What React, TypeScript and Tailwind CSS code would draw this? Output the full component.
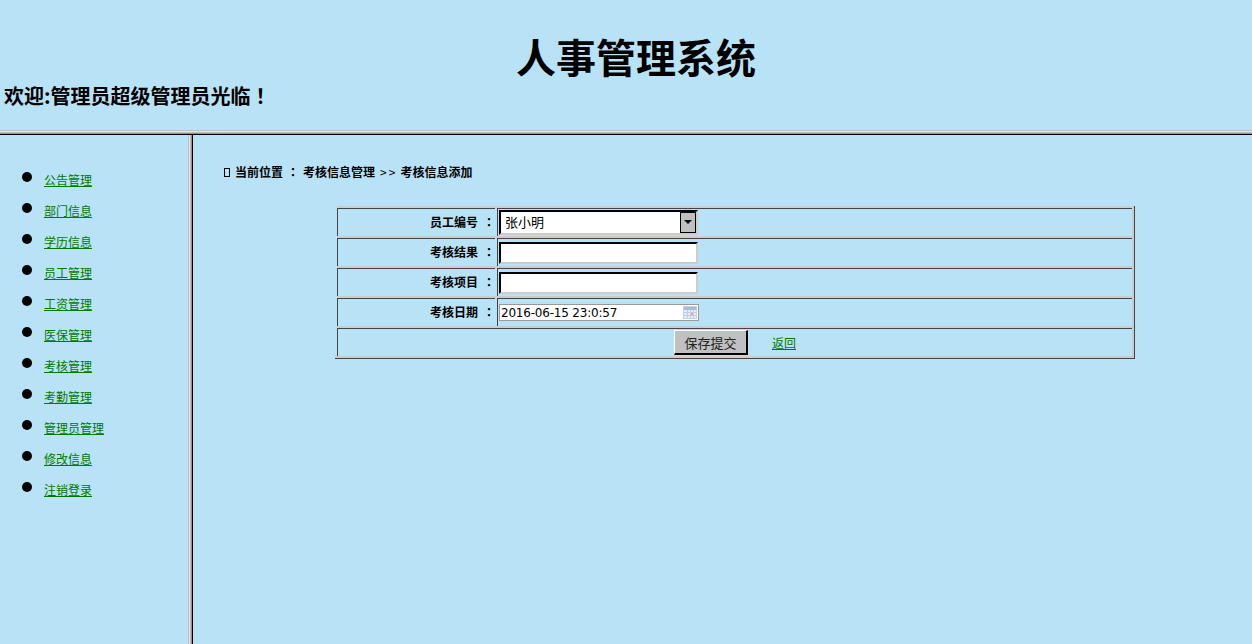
const nav = ["公告管理","部门信息","学历信息","员工管理","工资管理","医保管理","考核管理","考勤管理","管理员管理","修改信息","注销登录"];

const Full = ({ c }: { c: string }) => (
  <span style={{ fontFamily: "'Noto Sans CJK TC',sans-serif" }}>{c}</span>
);

function Row({ label, children }: { label: string; children: React.ReactNode }) {
  return (
    <div className="flex h-[30px] gap-[2px] border-t-2 border-r-2 border-[#ccc]">
      <div className="flex w-[158px] items-center justify-end border-l border-t border-[#444] pb-[2px] text-[12px] font-bold text-black">
        {label}<span className="ml-[5px]"><Full c="：" /></span>
      </div>
      <div className="flex flex-1 items-center border-l border-t border-[#444] pl-[1px]">{children}</div>
    </div>
  );
}

const inputCls = "h-[22px] w-[199px] border-2 border-t-black border-l-black border-b-[#ccc] border-r-[#ccc] bg-white";

export default function App() {
  return (
    <div className="flex h-[644px] w-[1252px] flex-col overflow-hidden bg-[#b8e2f5] text-black" style={{ fontFamily: "'Noto Sans CJK SC','Liberation Sans',sans-serif" }}>
      <header className="h-[130px] shrink-0">
        <h1 className="pt-[28px] pl-[20px] text-center text-[40px] leading-[56px] font-bold">人事管理系统</h1>
        <p className="pl-[4px] text-[20px] leading-[24px] font-bold">欢迎:管理员超级管理员光临<Full c="！" /></p>
      </header>
      <div className="h-[5px] shrink-0 bg-[linear-gradient(#c0c0c0_0_1px,#e4e4e4_1px_2px,#c0c0c0_2px_3px,#909090_3px_4px,#000_4px_5px)]" />
      <div className="flex min-h-0 flex-1">
        <aside className="w-[188px] shrink-0 pt-[25px]">
          <ul className="flex flex-col gap-[11px]">
            {nav.map((n) => (
              <li key={n} className="flex h-[20px] items-start">
                <span className="mt-[12px] ml-[22px] size-[10px] rounded-full bg-black" />
                <a className="mt-[11px] ml-[12px] text-[12px] leading-[18px] text-[#007a00] underline">{n}</a>
              </li>
            ))}
          </ul>
        </aside>
        <div className="w-[5px] shrink-0 bg-[linear-gradient(90deg,#c0c0c0_0_1px,#e4e4e4_1px_2px,#c0c0c0_2px_3px,#909090_3px_4px,#000_4px_5px)]" />
        <main className="flex-1 pl-[31px]">
          <div className="mt-[28px] flex h-[18px] items-center text-[12px] font-bold">
            <span className="mr-[5px] inline-block h-[9px] w-[6px] border border-black" />
            <span>当前位置</span>
            <span className="mx-[4px]"><Full c="：" /></span>
            <span>考核信息管理</span>
            <span className="mx-[5px] font-normal tracking-[2px]">&gt;&gt;</span>
            <span className="ml-[-2px]">考核信息添加</span>
          </div>
          <div className="mt-[25px] ml-[113px] w-[798px] border-r border-[#444]">
            <Row label="员工编号">
              <div className="flex h-[25px] w-[199px] items-center justify-between border-2 border-t-black border-l-black border-b-[#ccc] border-r-[#ccc] bg-white pb-[1px] pl-[4px] text-[13px]">
                张小明
                <span className="flex h-[21px] w-[16px] items-center justify-center border border-black bg-[#c0c0c0]">
                  <span className="size-0 border-x-[4px] border-t-[4px] border-x-transparent border-t-black" />
                </span>
              </div>
            </Row>
            <Row label="考核结果"><div className={inputCls} /></Row>
            <Row label="考核项目"><div className={inputCls} /></Row>
            <Row label="考核日期">
              <div className="flex h-[17px] w-[200px] items-center justify-between border border-[#999] bg-white pt-[1px] pr-[1px] pl-[1px] text-[12px] tracking-[-0.2px]" style={{ fontFamily: "'DejaVu Sans',sans-serif" }}>
                2016-06-15 23:0:57
                <svg width="14" height="13" viewBox="0 0 14 13" className="-mt-[1px]">
                  <rect x="0.5" y="0.5" width="13" height="12" fill="#e4ebf5" stroke="#c4d0e4" />
                  <rect x="1" y="1" width="12" height="3" fill="#aabbd8" />
                  <path d="M1 6.5H13M1 9.5H13M4.5 4V12M7.5 4V12M10.5 4V12" stroke="#c0cde2" />
                  <rect x="8" y="7" width="2" height="2" fill="#f0a080" />
                </svg>
              </div>
            </Row>
            <div className="flex h-[30px] border-t-2 border-r-2 border-[#ccc]">
              <div className="flex flex-1 items-center justify-center border-l border-t border-[#444]">
                <button className="h-[25px] w-[74px] border border-r-2 border-b-2 border-t-white border-r-black border-b-black border-l-white bg-[#c0c0c0] pt-[1px] text-[13px] text-[#222]">保存提交</button>
                <a className="ml-[24px] text-[12px] text-[#007a00] underline">返回</a>
              </div>
            </div>
            <div className="-ml-[2px] h-[3px] border-t-2 border-b border-t-[#ccc] border-b-[#444]" />
          </div>
        </main>
      </div>
    </div>
  );
}
